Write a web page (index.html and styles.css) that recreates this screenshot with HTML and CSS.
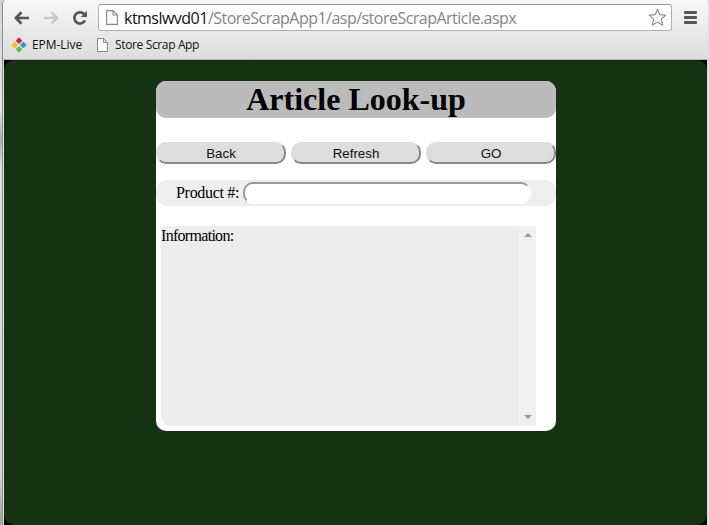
FILE: index.html
```
<!DOCTYPE html>
<html lang="en">
<head>
<meta charset="utf-8">
<title>Article Look-up</title>
<link rel="stylesheet" href="styles.css">
</head>
<body>
<div class="window">
  <header class="chrome">
    <div class="toolbar">
      <svg class="nav" width="16" height="14" viewBox="0 0 16 14"><path d="M7.5 1.2 1.9 7 7.5 12.8M2.2 7H15" fill="none" stroke="#555" stroke-width="2.7"/></svg>
      <svg class="nav" width="16" height="14" viewBox="0 0 16 14"><path d="M8.5 1.4 14.1 7 8.5 12.6M13.8 7H1" fill="none" stroke="#c8c8c8" stroke-width="2.4"/></svg>
      <svg class="reload" width="16" height="16" viewBox="0 0 16 16"><path d="M12.2 4.2A5.6 5.6 0 1 0 13 10.4" fill="none" stroke="#555" stroke-width="2.7"/><path d="M15 .8V7H8.8z" fill="#555"/></svg>
      <div class="address">
        <svg width="12" height="15" viewBox="0 0 12 15"><path d="M.6.6H7l4.4 4.4v9.4H.6zM7 .6V5h4.4" fill="#fafafa" stroke="#888" stroke-width="1.1"/></svg>
        <span class="url"><b>ktmslwvd01</b>/StoreScrapApp1/asp/storeScrapArticle.aspx</span>
        <svg class="star" width="19" height="19" viewBox="0 0 19 19"><path d="M9.5 1.2 11.8 6.6 17.8 7.2 13.3 11.2 14.7 17.2 9.5 14.1 4.3 17.2 5.7 11.2 1.2 7.2 7.2 6.6z" fill="#fff" stroke="#858585" stroke-width="1.1" stroke-linejoin="round"/></svg>
      </div>
      <div class="menu"><i></i><i></i><i></i></div>
    </div>
    <nav class="bookmarks">
      <svg width="16" height="16" viewBox="0 0 16 16"><g stroke-linejoin="round" stroke-width="1.6"><path d="M8 1.4 10.3 3.7 8 6 5.7 3.7z" fill="#d12640" stroke="#d12640"/><path d="M12.3 5.7 14.6 8 12.3 10.3 10 8z" fill="#2898c4" stroke="#2898c4"/><path d="M8 10 10.3 12.3 8 14.6 5.7 12.3z" fill="#6bb552" stroke="#6bb552"/><path d="M3.7 5.7 6 8 3.7 10.3 1.4 8z" fill="#f4bd20" stroke="#f4bd20"/></g></svg>
      <span class="epm">EPM-Live</span>
      <svg class="page-icon" width="11" height="14" viewBox="0 0 11 14"><path d="M.5.5H6.5l4 4v9H.5zM6.5.5v4h4" fill="#fafafa" stroke="#888"/></svg>
      <span class="store">Store Scrap App</span>
    </nav>
  </header>
  <div class="viewport">
    <main class="page">
      <section class="card">
        <h1>Article Look-up</h1>
        <div class="actions"><button>Back</button><button>Refresh</button><button>GO</button></div>
        <div class="field"><label for="product">Product #:</label><input id="product" type="text"></div>
        <div class="info">
          <span>Information:</span>
          <div class="scrollbar"><i class="up"></i><i class="down"></i></div>
        </div>
      </section>
    </main>
  </div>
</div>
</body>
</html>
```
FILE: styles.css
```
* { box-sizing: border-box; }
body {
  margin: 0;
  height: 525px;
  overflow: hidden;
  background: linear-gradient(#d4d4d4 0, #e4e4e4 110px, #a9abb6 140px, #dcdde2 165px, #d8d8dc 470px, #aaa5ad 515px);
}
.window {
  display: flex;
  flex-direction: column;
  height: 525px;
  margin-left: 2px;
  padding: 0 2px 0 1px;
  border-left: 1px solid #8d9193;
  border-top-left-radius: 4px;
  background: #e0e0e0;
}
.chrome {
  height: 60px;
  margin: 0 -1px;
  border-bottom: 1px solid #b5b8b3;
  background: linear-gradient(#f8f8f8, #dcdcdd);
  border-radius: 4px 4px 0 0;
}
.toolbar {
  display: flex;
  align-items: center;
  height: 31px;
  padding: 4px 0 0 11px;
}
.nav { margin-right: 13px; }
.reload { margin-right: 10px; }
.address {
  display: flex;
  align-items: center;
  width: 574px;
  height: 27px;
  padding: 0 4px 0 7px;
  border: 1px solid #b0b0b0;
  border-top-color: #999;
  border-radius: 3px;
  background: #fff;
}
.url {
  margin-left: 6px;
  color: #858585;
  font: 16px/24px "Open Sans", "Noto Sans", sans-serif;
  letter-spacing: -0.52px;
  white-space: nowrap;
}
.url b { color: #111; font-weight: 400; }
.star { margin-left: auto; }
.menu {
  display: grid;
  gap: 2px;
  margin-left: 12px;
}
.menu i {
  width: 13px;
  height: 3px;
  border-radius: 1px;
  background: #555;
}
.bookmarks {
  display: flex;
  align-items: center;
  height: 28px;
  padding-left: 8px;
  color: #111;
  font: 12px/16px "Open Sans", "Noto Sans", sans-serif;
  white-space: nowrap;
}
.epm { width: 51px; margin-left: 5px; letter-spacing: -0.05px; }
.page-icon { margin-left: 14px; }
.store { margin-left: 7px; letter-spacing: -0.36px; }
.viewport { flex: 1; background: #000; }
.page {
  height: 465px;
  padding: 21px 0 0 152px;
  border-radius: 10px;
  background: #153213;
}
.card {
  width: 400px;
  height: 350px;
  border-radius: 10px;
  background: #fff;
  font: 16px/20px "Liberation Serif", serif;
}
h1 {
  height: 37px;
  margin: 0 0 24px;
  border-radius: 10px;
  background: #bbb;
  font-size: 32px;
  line-height: 37px;
  text-align: center;
}
.actions { display: flex; gap: 5px; }
button {
  width: 130px;
  height: 22px;
  padding: 0;
  border: 2px solid;
  border-color: #ddd #888 #888 #ddd;
  border-radius: 10px;
  background: #ddd;
  color: #111;
  font: 13.333px "Liberation Sans", sans-serif;
}
.field {
  display: flex;
  align-items: center;
  height: 26px;
  margin-top: 16px;
  padding-left: 20px;
  border-radius: 10px;
  background: #eee;
}
.field label { width: 67px; letter-spacing: -0.3px; white-space: nowrap; }
.field input {
  width: 288px;
  height: 22px;
  border: 2px solid;
  border-color: #999 #fff #fff #999;
  border-radius: 10px;
  background: #fff;
}
.info {
  display: flex;
  justify-content: space-between;
  width: 375px;
  height: 200px;
  margin: 20px 0 0 5px;
  border-bottom-left-radius: 10px;
  background: #ededed;
}
.info span { letter-spacing: -0.7px; }
.scrollbar {
  display: flex;
  flex-direction: column;
  justify-content: space-between;
  align-items: center;
  width: 17px;
  padding: 7px 0;
  background: #f0f0f0;
}
.up, .down {
  border: solid transparent;
  border-width: 0 4px;
}
.up { border-bottom: 4px solid #999; }
.down { border-top: 4px solid #999; }
```
